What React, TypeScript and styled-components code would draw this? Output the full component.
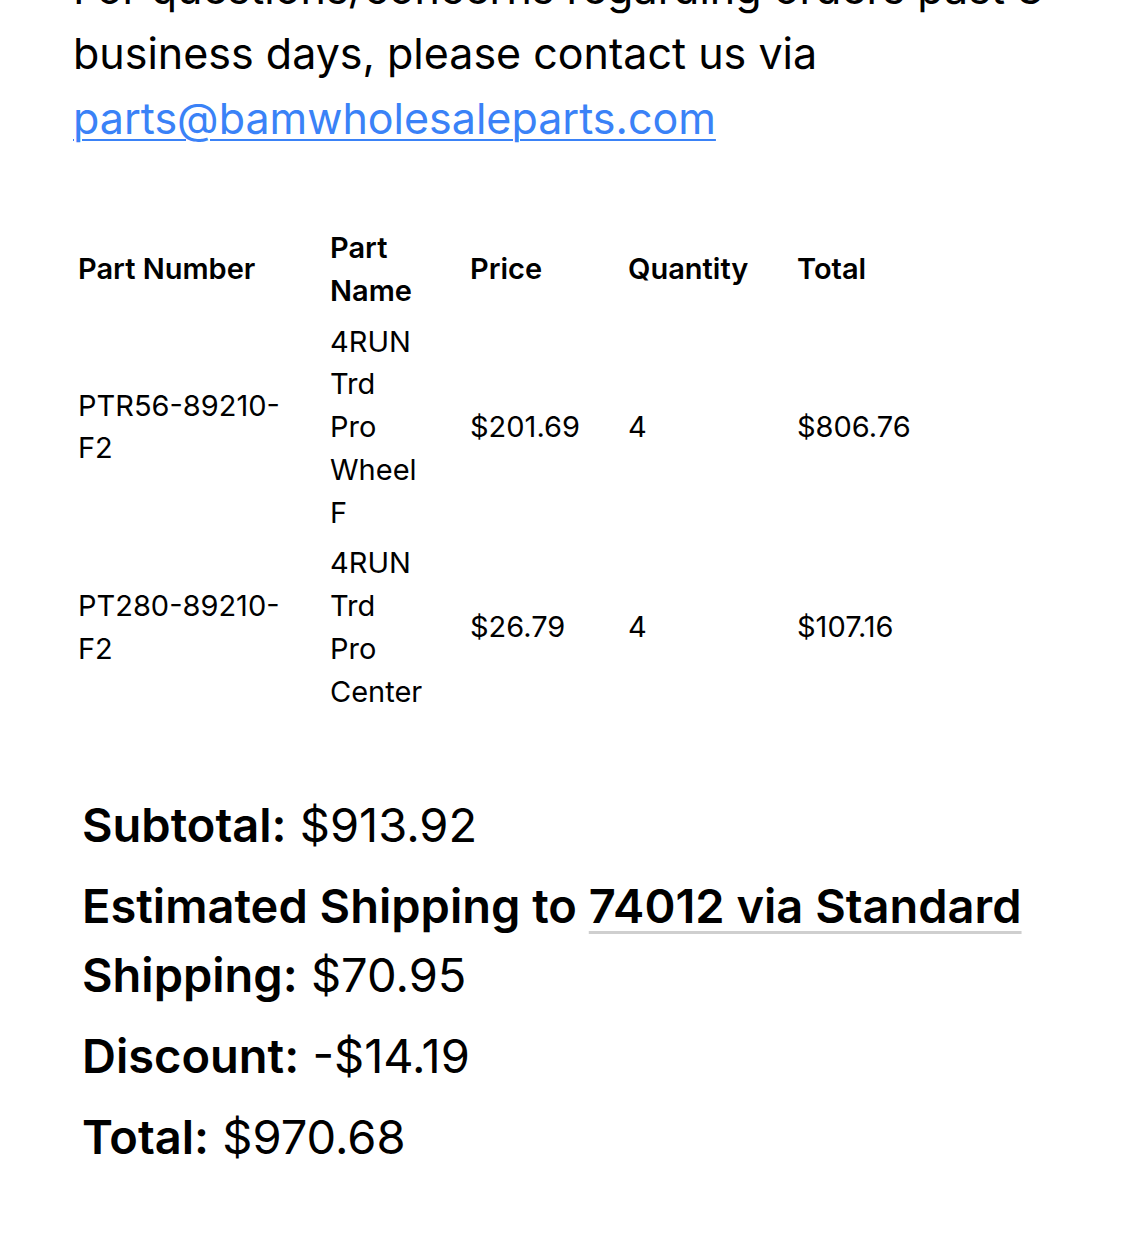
import styled, { createGlobalStyle } from "styled-components";

const GlobalStyle = createGlobalStyle`
  html, body {
    margin: 0;
    padding: 0;
    background: #ffffff;
  }

  body {
    font-family: Inter, "Noto Sans", "Liberation Sans", sans-serif;
    color: #000000;
    overflow: hidden;
  }
`;

const Mail = styled.div`
  padding: 0 30px 0 73px;
`;

const Notice = styled.p`
  margin: -44px 0 0;
  font-size: 43px;
  line-height: 65px;
`;

const MailLink = styled.a`
  color: #3a82f7;
  text-decoration: underline;
  text-decoration-thickness: 2px;
  text-underline-offset: 5px;
`;

const PartsTable = styled.table`
  margin-top: 72px;
  border-collapse: collapse;
  table-layout: fixed;
  width: 1000px;
  font-size: 29px;
  line-height: 42.75px;
`;

const Col = styled.col<{ $w: number }>`
  width: ${(p) => p.$w}px;
`;

const HeadCell = styled.th`
  text-align: left;
  font-weight: 600;
  padding: 4px 38px 4px 5px;
  vertical-align: middle;
`;

const Cell = styled.td`
  padding: 4px 38px 4px 5px;
  vertical-align: middle;
`;

const Summary = styled.div`
  margin-top: 73px;
  padding-left: 9px;
  display: flex;
  flex-direction: column;
  gap: 12px;
`;

const Line = styled.p`
  margin: 0;
  font-size: 47px;
  line-height: 69px;
`;

const Label = styled.strong`
  font-weight: 600;
`;

const Detected = styled.span`
  text-decoration: underline;
  text-decoration-color: #cfcfcf;
  text-decoration-thickness: 3px;
  text-underline-offset: 8px;
`;

type Part = {
  number: string;
  name: string;
  price: string;
  qty: number;
  total: string;
};

const parts: Part[] = [
  {
    number: "PTR56-89210-F2",
    name: "4RUN Trd Pro Wheel F",
    price: "$201.69",
    qty: 4,
    total: "$806.76",
  },
  {
    number: "PT280-89210-F2",
    name: "4RUN Trd Pro Center",
    price: "$26.79",
    qty: 4,
    total: "$107.16",
  },
];

export default function App() {
  return (
    <>
      <GlobalStyle />
      <Mail>
        <Notice>
          For questions/concerns regarding orders past 3 business days, please
          contact us via{" "}
          <MailLink href="mailto:parts@bamwholesaleparts.com">
            parts@bamwholesaleparts.com
          </MailLink>
        </Notice>

        <PartsTable>
          <colgroup>
            <Col $w={252} />
            <Col $w={140} />
            <Col $w={158} />
            <Col $w={169} />
            <Col $w={281} />
          </colgroup>
          <thead>
            <tr>
              <HeadCell>Part Number</HeadCell>
              <HeadCell>Part Name</HeadCell>
              <HeadCell>Price</HeadCell>
              <HeadCell>Quantity</HeadCell>
              <HeadCell>Total</HeadCell>
            </tr>
          </thead>
          <tbody>
            {parts.map((p) => (
              <tr key={p.number}>
                <Cell>{p.number}</Cell>
                <Cell>{p.name}</Cell>
                <Cell>{p.price}</Cell>
                <Cell>{p.qty}</Cell>
                <Cell>{p.total}</Cell>
              </tr>
            ))}
          </tbody>
        </PartsTable>

        <Summary>
          <Line>
            <Label>Subtotal:</Label> $913.92
          </Line>
          <Line>
            <Label>
              Estimated Shipping to <Detected>74012 via Standard</Detected>{" "}
              Shipping:
            </Label>{" "}
            $70.95
          </Line>
          <Line>
            <Label>Discount:</Label> -$14.19
          </Line>
          <Line>
            <Label>Total:</Label> $970.68
          </Line>
        </Summary>
      </Mail>
    </>
  );
}
